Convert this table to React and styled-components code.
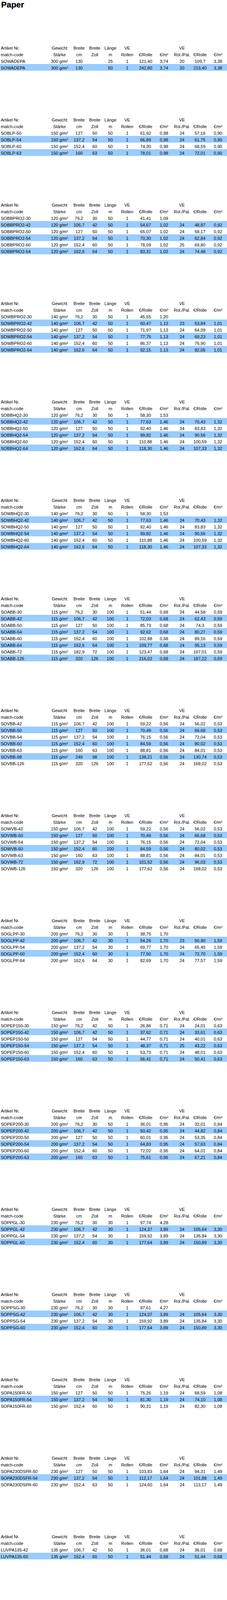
import React from "react";
import styled, { createGlobalStyle } from "styled-components";

const GlobalStyle = createGlobalStyle`
  html, body {
    margin: 0;
    padding: 0;
    background: #ffffff;
  }
  body {
    font-family: "Liberation Sans", Arial, sans-serif;
    color: #000000;
  }
`;

const Page = styled.div`
  width: 580px;
  display: flex;
  flex-direction: column;
`;

const Title = styled.h1`
  margin: 0 0 89px 0;
  padding-left: 3px;
  font-family: "Liberation Sans", Arial, sans-serif;
  font-weight: 700;
  font-size: 21px;
  line-height: 24px;
  -webkit-text-stroke: 0.4px #000;
`;

const Sheet = styled.div`
  display: flex;
  flex-direction: column;
  gap: 116px;
`;

const Table = styled.div`
  display: flex;
  flex-direction: column;
`;

const Row = styled.div`
  display: grid;
  grid-template-columns: 122px 60px 40px 40px 40px 46px 48px 46px 46px 46px 46px;
  height: 17px;
  background: ${(p) => (p.$shaded ? "#99ccff" : "transparent")};
`;

const Cell = styled.div`
  padding-top: 4px;
  padding-left: ${(p) => (p.$first ? "2px" : "0")};
  font-size: 11px;
  line-height: 13px;
  white-space: nowrap;
  text-align: ${(p) => (p.$first ? "left" : "center")};
`;

const headTop = ["Artikel Nr.", "Gewicht", "Breite", "Breite", "Länge", "VE", "", "", "VE", "", ""];
const headSub = ["match-code", "Stärke", "cm", "Zoll", "m", "Rollen", "€/Rolle", "€/m²", "Rol./Pal.", "€/Rolle", "€/m²"];

// [code, gewicht, cm, zoll, länge, ve, €/rolle, €/m², rol/pal, €/rolle, €/m²]
const tables = [
  [
    ["SOWADEPA", "300 g/m²", "130", "", "25", "1", "121,40", "3,74", "20", "109,7", "3,38"],
    ["SOWADEPA", "300 g/m²", "130", "", "50", "1", "242,80", "3,74", "20", "219,40", "3,38"],
  ],
  [
    ["SOBLP-50", "150 g/m²", "127", "50", "50", "1", "61,92", "0,98", "24", "57,16", "0,90"],
    ["SOBLP-54", "150 g/m²", "137,2", "54", "50", "1", "66,89", "0,98", "24", "61,75", "0,90"],
    ["SOBLP-60", "150 g/m²", "152,4", "60", "50", "1", "74,30", "0,98", "24", "68,59", "0,90"],
    ["SOBLP-63", "150 g/m²", "160", "63", "50", "1", "78,01", "0,98", "24", "72,01", "0,90"],
  ],
  [
    ["SOBBPRO2-30", "120 g/m²", "76,2", "30", "50", "1", "41,41", "1,09", "", "", ""],
    ["SOBBPRO2-42", "120 g/m²", "106,7", "42", "50", "1", "54,67", "1,02", "24", "48,87", "0,92"],
    ["SOBBPRO2-50", "120 g/m²", "127", "50", "50", "1", "65,07", "1,02", "24", "58,17", "0,92"],
    ["SOBBPRO2-54", "120 g/m²", "137,2", "54", "50", "1", "70,30", "1,02", "24", "62,84", "0,92"],
    ["SOBBPRO2-60", "120 g/m²", "152,4", "60", "50", "1", "78,09", "1,02", "25", "69,80", "0,92"],
    ["SOBBPRO2-64", "120 g/m²", "162,6", "64", "50", "1", "83,31", "1,02", "24", "74,48", "0,92"],
  ],
  [
    ["SOWBPRO2-30", "140 g/m²", "76,2", "30", "50", "1", "45,55", "1,20", "", "", ""],
    ["SOWBPRO2-42", "140 g/m²", "106,7", "42", "50", "1", "60,47", "1,13", "23", "53,84", "1,01"],
    ["SOWBPRO2-50", "140 g/m²", "127", "50", "50", "1", "71,97", "1,13", "24", "64,09", "1,01"],
    ["SOWBPRO2-54", "140 g/m²", "137,2", "54", "50", "1", "77,75", "1,13", "24", "69,23", "1,01"],
    ["SOWBPRO2-60", "140 g/m²", "152,4", "60", "50", "1", "86,37", "1,13", "24", "76,90", "1,01"],
    ["SOWBPRO2-64", "140 g/m²", "162,6", "64", "50", "1", "92,15", "1,13", "24", "82,05", "1,01"],
  ],
  [
    ["SOBBHQ2-30", "120 g/m²", "76,2", "30", "50", "1", "58,30", "1,53", "", "", ""],
    ["SOBBHQ2-42", "120 g/m²", "106,7", "42", "50", "1", "77,63", "1,46", "24", "70,43", "1,32"],
    ["SOBBHQ2-50", "120 g/m²", "127", "50", "50", "1", "92,40", "1,46", "24", "83,83", "1,32"],
    ["SOBBHQ2-54", "120 g/m²", "137,2", "54", "50", "1", "99,82", "1,46", "24", "90,56", "1,32"],
    ["SOBBHQ2-60", "120 g/m²", "152,4", "60", "50", "1", "110,88", "1,46", "24", "100,59", "1,32"],
    ["SOBBHQ2-64", "120 g/m²", "162,6", "64", "50", "1", "118,30", "1,46", "24", "107,33", "1,32"],
  ],
  [
    ["SOWBHQ2-30", "140 g/m²", "76,2", "30", "50", "1", "58,30", "1,53", "", "", ""],
    ["SOWBHQ2-42", "140 g/m²", "106,7", "42", "50", "1", "77,63", "1,46", "24", "70,43", "1,32"],
    ["SOWBHQ2-50", "140 g/m²", "127", "50", "50", "1", "92,40", "1,46", "24", "83,83", "1,32"],
    ["SOWBHQ2-54", "140 g/m²", "137,2", "54", "50", "1", "99,82", "1,46", "24", "90,56", "1,32"],
    ["SOWBHQ2-60", "140 g/m²", "152,4", "60", "50", "1", "110,88", "1,46", "24", "100,59", "1,32"],
    ["SOWBHQ2-64", "140 g/m²", "162,6", "64", "50", "1", "118,30", "1,46", "24", "107,33", "1,32"],
  ],
  [
    ["SOABB-30", "115 g/m²", "76,2", "30", "100", "1", "51,44", "0,68", "24", "44,58", "0,59"],
    ["SOABB-42", "115 g/m²", "106,7", "42", "100", "1", "72,03", "0,68", "24", "62,43", "0,59"],
    ["SOABB-50", "115 g/m²", "127", "50", "100", "1", "85,73", "0,68", "24", "74,3", "0,59"],
    ["SOABB-54", "115 g/m²", "137,2", "54", "100", "1", "92,62", "0,68", "24", "80,27", "0,59"],
    ["SOABB-60", "115 g/m²", "152,4", "60", "100", "1", "102,88", "0,68", "24", "89,16", "0,59"],
    ["SOABB-64", "115 g/m²", "162,6", "64", "100", "1", "109,77", "0,68", "24", "95,13", "0,59"],
    ["SOABB-72", "115 g/m²", "182,9", "72", "100", "1", "123,47", "0,68", "24", "107,01", "0,59"],
    ["SOABB-126", "115 g/m²", "320", "126", "100", "1", "216,02", "0,68", "24", "187,22", "0,59"],
  ],
  [
    ["SOVBB-42", "115 g/m²", "106,7", "42", "100", "1", "59,22", "0,56", "24", "56,02", "0,53"],
    ["SOVBB-50", "115 g/m²", "127", "50", "100", "1", "70,49", "0,56", "24", "66,68", "0,53"],
    ["SOVBB-54", "115 g/m²", "137,2", "54", "100", "1", "76,15", "0,56", "24", "72,04", "0,53"],
    ["SOVBB-60", "115 g/m²", "152,4", "60", "100", "1", "84,59", "0,56", "24", "80,02", "0,53"],
    ["SOVBB-63", "115 g/m²", "160", "63", "100", "1", "88,81", "0,56", "24", "84,01", "0,53"],
    ["SOVBB-98", "115 g/m²", "249", "98", "100", "1", "138,21", "0,56", "24", "130,74", "0,53"],
    ["SOVBB-126", "115 g/m²", "320", "126", "100", "1", "177,62", "0,56", "24", "168,02", "0,53"],
  ],
  [
    ["SOWVB-42", "150 g/m²", "106,7", "42", "100", "1", "59,22", "0,56", "24", "56,02", "0,53"],
    ["SOVWB-50", "150 g/m²", "127", "50", "100", "1", "70,49", "0,56", "24", "66,68", "0,53"],
    ["SOVWB-54", "150 g/m²", "137,2", "54", "100", "1", "76,15", "0,56", "24", "72,04", "0,53"],
    ["SOWVB-60", "150 g/m²", "152,4", "60", "100", "1", "84,59", "0,56", "24", "80,02", "0,53"],
    ["SOVWB-63", "150 g/m²", "160", "63", "100", "1", "88,81", "0,56", "24", "84,01", "0,53"],
    ["SOVWB-72", "150 g/m²", "182,9", "72", "100", "1", "101,52", "0,56", "24", "96,03", "0,53"],
    ["SOVWB-126", "150 g/m²", "320", "126", "100", "1", "177,62", "0,56", "24", "168,02", "0,53"],
  ],
  [
    ["SOGLPP-30", "200 g/m²", "76,2", "30", "30", "1", "38,75", "1,70", "", "", ""],
    ["SOGLPP-42", "200 g/m²", "106,7", "42", "30", "1", "54,26", "1,70", "23", "50,90", "1,59"],
    ["SOGLPP-54", "200 g/m²", "137,2", "54", "30", "1", "69,77", "1,70", "24", "65,45", "1,59"],
    ["SOGLPP-60", "200 g/m²", "152,4", "60", "30", "1", "77,50", "1,70", "24", "72,70", "1,59"],
    ["SOGLPP-64", "200 g/m²", "162,6", "64", "30", "1", "82,69", "1,70", "24", "77,57", "1,59"],
  ],
  [
    ["SOPEP150-30", "150 g/m²", "76,2", "42", "50", "1", "26,86", "0,71", "24", "24,01", "0,63"],
    ["SOPEP150-42", "150 g/m²", "106,7", "42", "50", "1", "37,62", "0,71", "24", "33,61", "0,63"],
    ["SOPEP150-50", "150 g/m²", "127", "54", "50", "1", "44,77", "0,71", "24", "40,01", "0,63"],
    ["SOPEP150-54", "150 g/m²", "137,2", "54", "50", "1", "48,37", "0,71", "25", "43,22", "0,63"],
    ["SOPEP150-60", "150 g/m²", "152,4", "60", "50", "1", "53,73", "0,71", "24", "48,01", "0,63"],
    ["SOPEP150-63", "150 g/m²", "160", "63", "50", "1", "56,41", "0,71", "24", "50,41", "0,63"],
  ],
  [
    ["SOPEP200-30", "200 g/m²", "76,2", "30", "50", "1", "36,01", "0,95", "24", "32,01", "0,84"],
    ["SOPEP200-42", "200 g/m²", "106,7", "42", "50", "1", "50,42", "0,95", "24", "44,82", "0,84"],
    ["SOPEP200-50", "200 g/m²", "127", "50", "50", "1", "60,01", "0,95", "24", "53,35", "0,84"],
    ["SOPEP200-54", "200 g/m²", "137,2", "54", "50", "1", "64,83", "0,95", "24", "57,63", "0,84"],
    ["SOPEP200-60", "200 g/m²", "152,4", "60", "50", "1", "72,02", "0,95", "24", "64,01", "0,84"],
    ["SOPEP200-63", "200 g/m²", "160", "63", "50", "1", "75,61", "0,95", "24", "67,21", "0,84"],
  ],
  [
    ["SOPPGL-30", "230 g/m²", "76,2", "30", "30", "1", "97,74", "4,28", "", "", ""],
    ["SOPPGL-42", "230 g/m²", "106,7", "42", "30", "1", "124,37", "3,89", "24", "105,64", "3,30"],
    ["SOPPGL-54", "230 g/m²", "137,2", "54", "30", "1", "159,92", "3,89", "24", "135,84", "3,30"],
    ["SOPPGL-60", "230 g/m²", "152,4", "60", "30", "1", "177,64", "3,89", "24", "150,89", "3,30"],
  ],
  [
    ["SOPPSG-30", "230 g/m²", "76,2", "30", "30", "1", "97,61", "4,27", "", "", ""],
    ["SOPPSG-42", "230 g/m²", "106,7", "42", "30", "1", "124,37", "3,89", "24", "105,64", "3,30"],
    ["SOPPSG-54", "230 g/m²", "137,2", "54", "30", "1", "159,92", "3,89", "24", "135,84", "3,30"],
    ["SOPPSG-60", "230 g/m²", "152,4", "60", "30", "1", "177,64", "3,89", "24", "150,89", "3,30"],
  ],
  [
    ["SOPA150FR-50", "150 g/m²", "127", "50", "50", "1", "75,26", "1,19", "24", "68,59", "1,08"],
    ["SOPA150FR-54", "150 g/m²", "137,2", "54", "50", "1", "81,30", "1,19", "24", "74,10", "1,08"],
    ["SOPA150FR-60", "150 g/m²", "152,4", "60", "50", "1", "90,31", "1,19", "24", "82,30", "1,08"],
  ],
  [
    ["SOPA230DSFR-50", "230 g/m²", "127", "50", "50", "1", "103,83", "1,64", "24", "94,31", "1,49"],
    ["SOPA230DSFR-54", "230 g/m²", "137,2", "54", "50", "1", "112,17", "1,64", "24", "101,88", "1,49"],
    ["SOPA230DSFR-60", "230 g/m²", "152,4", "63", "50", "1", "124,60", "1,64", "24", "113,17", "1,49"],
  ],
  [
    ["LUVPA135-42", "135 g/m²", "106,7", "42", "50", "1", "36,01", "0,68", "24", "36,01", "0,68"],
    ["LUVPA135-60", "135 g/m²", "152,4", "60", "50", "1", "51,44", "0,68", "24", "51,44", "0,68"],
  ],
  [
    ["LUVPA170-42", "135 g/m²", "106,7", "42", "50", "1", "42,42", "0,80", "24", "42,42", "0,80"],
    ["LUVPA170-60", "135 g/m²", "152,4", "60", "50", "1", "60,59", "0,80", "24", "60,59", "0,80"],
  ],
];

const Line = ({ cells, shaded }) => (
  <Row $shaded={shaded}>
    {cells.map((c, i) => (
      <Cell key={i} $first={i === 0}>
        {c}
      </Cell>
    ))}
  </Row>
);

const PriceTable = ({ rows }) => (
  <Table>
    <Line cells={headTop} />
    <Line cells={headSub} />
    {rows.map((r, i) => (
      <Line key={r[0] + i} cells={r} shaded={i % 2 === 1} />
    ))}
  </Table>
);

export default function App() {
  return (
    <Page>
      <GlobalStyle />
      <Title>Paper</Title>
      <Sheet>
        {tables.map((rows, i) => (
          <PriceTable key={i} rows={rows} />
        ))}
      </Sheet>
    </Page>
  );
}
